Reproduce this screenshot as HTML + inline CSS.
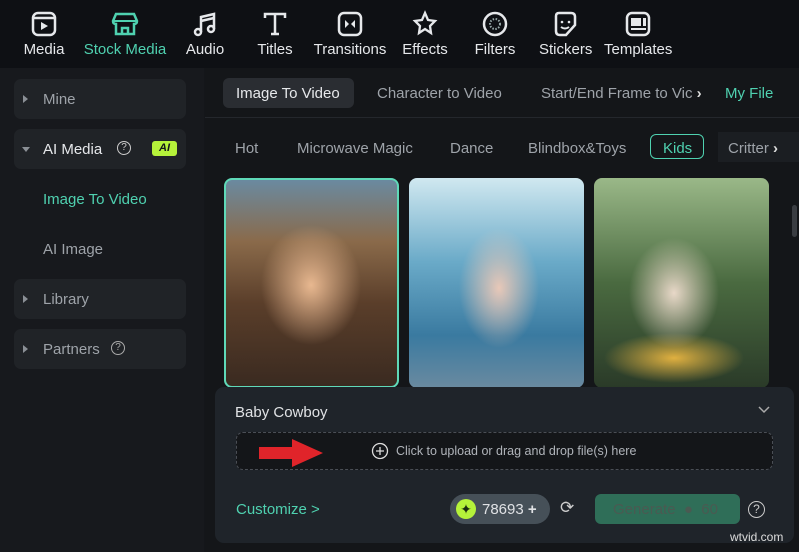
<!DOCTYPE html>
<html><head><meta charset="utf-8"><style>
*{margin:0;padding:0;box-sizing:border-box}
body{width:799px;height:552px;background:#14161a;font-family:"Liberation Sans",sans-serif;color:#d0d3d8;position:relative;overflow:hidden}
.top{position:absolute;left:0;top:0;width:799px;height:68px;background:#0e1014}
.ti{position:absolute;top:2px;text-align:center;font-size:15px;color:#e6e8eb}
.ti svg{display:block;margin:8px auto 3px;width:28px;height:28px}
.side{position:absolute;left:0;top:68px;width:204px;height:484px;background:#17191d}
.si{position:absolute;left:14px;width:172px;height:40px;border-radius:7px;background:#202327;font-size:15px;color:#9ea3a9}
.si span.t{position:absolute;left:29px;top:12px}
.tri{position:absolute;left:9px;top:16px;width:0;height:0;border-left:5px solid #8a8f95;border-top:4px solid transparent;border-bottom:4px solid transparent}
.main{position:absolute;left:205px;top:68px;width:594px;height:484px;background:#141619}
.tab{position:absolute;top:85px;font-size:15px;color:#9ea3a9}
.cat{position:absolute;top:140px;font-size:15px;color:#9ea3a9}
.img{position:absolute;top:178px;width:175px;height:210px;border-radius:8px}
.panel{position:absolute;left:215px;top:387px;width:579px;height:156px;background:#1f242a;border-radius:9px}
</style></head><body>
<div class="top">
 <div class="ti" style="left:22px;width:44px"><svg viewBox="0 0 28 28"><rect x="3" y="3" width="22" height="22" rx="5" fill="none" stroke="#e6e8eb" stroke-width="2.5"/><line x1="3" y1="8" x2="25" y2="8" stroke="#e6e8eb" stroke-width="2.5"/><path d="M11 12 L18 16 L11 20Z" fill="#e6e8eb"/></svg>Media</div>
 <div class="ti" style="left:82px;width:86px;color:#4fd1b0"><svg viewBox="0 0 28 28"><path d="M5 4 H23 L26 11 Q26 14 23 14 V24 H5 V14 Q2 14 2 11Z" fill="none" stroke="#4fd1b0" stroke-width="2.5"/><path d="M11 24 V18 H17 V24" fill="none" stroke="#4fd1b0" stroke-width="2.5"/><line x1="3" y1="11" x2="25" y2="11" stroke="#4fd1b0" stroke-width="2"/></svg>Stock Media</div>
 <div class="ti" style="left:183px;width:44px"><svg viewBox="0 0 28 28"><path d="M10 22 V7 L23 4 V19" fill="none" stroke="#e6e8eb" stroke-width="2.5"/><circle cx="7" cy="22" r="3" fill="none" stroke="#e6e8eb" stroke-width="2.5"/><circle cx="20" cy="19" r="3" fill="none" stroke="#e6e8eb" stroke-width="2.5"/><line x1="10" y1="11" x2="23" y2="8" stroke="#e6e8eb" stroke-width="2.5"/></svg>Audio</div>
 <div class="ti" style="left:255px;width:40px"><svg viewBox="0 0 28 28"><path d="M4 8 V4 H24 V8 M14 4 V24 M10 24 H18" fill="none" stroke="#e6e8eb" stroke-width="2.5"/></svg>Titles</div>
 <div class="ti" style="left:313px;width:74px"><svg viewBox="0 0 28 28"><rect x="3" y="3" width="22" height="22" rx="5" fill="none" stroke="#e6e8eb" stroke-width="2.5"/><path d="M9 10 L13 14 L9 18Z M19 10 L15 14 L19 18Z" fill="#e6e8eb"/></svg>Transitions</div>
 <div class="ti" style="left:402px;width:46px"><svg viewBox="0 0 28 28"><path d="M14 3 L17 10 L24 11 L19 16 L20 23 L14 19 L8 23 L9 16 L4 11 L11 10Z" fill="none" stroke="#e6e8eb" stroke-width="2.3"/></svg>Effects</div>
 <div class="ti" style="left:474px;width:42px"><svg viewBox="0 0 28 28"><circle cx="14" cy="14" r="11" fill="none" stroke="#e6e8eb" stroke-width="2.5"/><circle cx="14" cy="14" r="5" fill="none" stroke="#9aa" stroke-width="2" stroke-dasharray="1.5 1.5"/></svg>Filters</div>
 <div class="ti" style="left:539px;width:52px"><svg viewBox="0 0 28 28"><path d="M5 6 Q5 3 8 3 H20 Q24 3 24 7 V15 L15 25 H9 Q5 25 5 21Z" fill="none" stroke="#e6e8eb" stroke-width="2.5"/><circle cx="11" cy="12" r="1.3" fill="#e6e8eb"/><circle cx="18" cy="12" r="1.3" fill="#e6e8eb"/><path d="M10 17 Q14 20 18 17" fill="none" stroke="#e6e8eb" stroke-width="2"/></svg>Stickers</div>
 <div class="ti" style="left:604px;width:68px"><svg viewBox="0 0 28 28"><rect x="3" y="3" width="22" height="22" rx="5" fill="none" stroke="#e6e8eb" stroke-width="2.5"/><rect x="7" y="8" width="10" height="8" fill="#e6e8eb"/><rect x="19" y="8" width="3" height="8" fill="#e6e8eb"/><line x1="7" y1="19" x2="22" y2="19" stroke="#e6e8eb" stroke-width="2"/></svg>Templates</div>
</div>
<div class="side">
 <div class="si" style="top:11px"><div class="tri"></div><span class="t">Mine</span></div>
 <div class="si" style="top:61px"><div class="tri" style="left:8px;top:18px;border-left:4px solid transparent;border-right:4px solid transparent;border-top:5px solid #8a8f95;border-bottom:0"></div><span class="t" style="color:#e6e8eb">AI Media</span><span style="position:absolute;left:103px;top:12px;width:14px;height:14px;border:1.5px solid #ccc;border-radius:50%;font-size:10px;text-align:center;line-height:11px;color:#ccc">?</span><span style="position:absolute;left:138px;top:12px;width:25px;height:15px;background:#b5f23a;border-radius:3px;color:#14161a;font-size:11px;font-weight:bold;font-style:italic;text-align:center;line-height:15px">AI</span></div>
 <div style="position:absolute;left:43px;top:123px;font-size:15px;color:#4fd1b0">Image To Video</div>
 <div style="position:absolute;left:43px;top:173px;font-size:15px;color:#9ea3a9">AI Image</div>
 <div class="si" style="top:211px"><div class="tri"></div><span class="t">Library</span></div>
 <div class="si" style="top:261px"><div class="tri"></div><span class="t">Partners</span><span style="position:absolute;left:97px;top:12px;width:14px;height:14px;border:1.5px solid #aaa;border-radius:50%;font-size:10px;text-align:center;line-height:11px;color:#aaa">?</span></div>
</div>
<div class="main"></div>
<div style="position:absolute;left:223px;top:78px;width:131px;height:30px;border-radius:6px;background:#2a2d32"></div>
<div class="tab" style="left:236px;color:#e6e8eb">Image To Video</div>
<div class="tab" style="left:377px">Character to Video</div>
<div class="tab" style="left:541px">Start/End Frame to Vic <b style="color:#ddd">›</b></div>
<div class="tab" style="left:725px;color:#4fd1b0">My File</div>
<div style="position:absolute;left:205px;top:117px;width:594px;height:1px;background:#24272c"></div>
<div class="cat" style="left:235px">Hot</div>
<div class="cat" style="left:297px">Microwave Magic</div>
<div class="cat" style="left:450px">Dance</div>
<div class="cat" style="left:528px">Blindbox&amp;Toys</div>
<div style="position:absolute;left:650px;top:134px;width:54px;height:25px;border:1.5px solid #4fd1b0;border-radius:6px"></div>
<div class="cat" style="left:663px;color:#4fd1b0">Kids</div>
<div style="position:absolute;left:718px;top:132px;width:81px;height:30px;background:#1b1e22"></div>
<div class="cat" style="left:728px">Critter <b style="color:#ddd">›</b></div>
<div class="img" style="left:224px;border:2.5px solid #5fd9b8;background:radial-gradient(ellipse 50px 60px at 85px 105px,#e8b890,transparent),linear-gradient(180deg,#6a8aa0 0%,#8a6a4a 30%,#5a3e2a 60%,#3a2a20 100%)"></div>
<div class="img" style="left:409px;background:radial-gradient(ellipse 40px 60px at 90px 110px,#e8c8b8,transparent),linear-gradient(180deg,#d0e8f0 0%,#6aaac8 40%,#3a7aa0 75%,#6a8aa0 100%)"></div>
<div class="img" style="left:594px;background:radial-gradient(ellipse 45px 55px at 80px 115px,#e8d8c8,transparent),radial-gradient(ellipse 70px 25px at 80px 180px,#e0b040,transparent),linear-gradient(180deg,#9ab888 0%,#4a6a40 50%,#2a3a28 100%)"></div>
<div style="position:absolute;left:792px;top:205px;width:5px;height:32px;border-radius:3px;background:#3a3d42"></div>
<div class="panel">
 <div style="position:absolute;left:20px;top:17px;font-size:15px;color:#e0e2e5">Baby Cowboy</div>
 <svg style="position:absolute;left:543px;top:19px" width="12" height="8"><path d="M1 1 L6 6 L11 1" fill="none" stroke="#aaa" stroke-width="1.5"/></svg>
 <div style="position:absolute;left:21px;top:45px;width:537px;height:38px;border:1.5px dashed #4a4e55;border-radius:7px;background:#141619"></div>
 <svg style="position:absolute;left:44px;top:51px" width="65" height="30"><path d="M0 9 H33 V1 L64 15 L33 29 V21 H0Z" fill="#e0242a"/></svg>
 <svg style="position:absolute;left:156px;top:55px" width="18" height="18"><circle cx="9" cy="9" r="7.5" fill="none" stroke="#ddd" stroke-width="1.3"/><path d="M9 5 V13 M5 9 H13" stroke="#ddd" stroke-width="1.3"/></svg>
 <div style="position:absolute;left:181px;top:57px;font-size:12.5px;color:#b0b4ba">Click to upload or drag and drop file(s) here</div>
 <div style="position:absolute;left:21px;top:114px;font-size:15px;color:#4fd1b0">Customize &gt;</div>
 <div style="position:absolute;left:235px;top:107px;width:100px;height:30px;border-radius:15px;background:#465058"></div>
 <div style="position:absolute;left:241px;top:112px;width:20px;height:20px;border-radius:50%;background:#b5f23a;color:#1a2a10;font-size:14px;text-align:center;line-height:20px">✦</div>
 <div style="position:absolute;left:267px;top:114px;font-size:15px;color:#e0e2e5">78693 <b>+</b></div>
 <div style="position:absolute;left:345px;top:111px;font-size:17px;color:#ccc">⟳</div>
 <div style="position:absolute;left:380px;top:107px;width:145px;height:30px;border-radius:6px;background:#2f6e58"></div>
 <div style="position:absolute;left:398px;top:114px;font-size:15px;color:#4a5a52">Generate &nbsp;●&nbsp; 60</div>
 <div style="position:absolute;left:533px;top:114px;width:17px;height:17px;border:1.5px solid #ccc;border-radius:50%;font-size:12px;text-align:center;line-height:14px;color:#ccc">?</div>
</div>
<div style="position:absolute;left:730px;top:530px;font-size:12px;color:#ddd">wtvid.com</div>
</body></html>
